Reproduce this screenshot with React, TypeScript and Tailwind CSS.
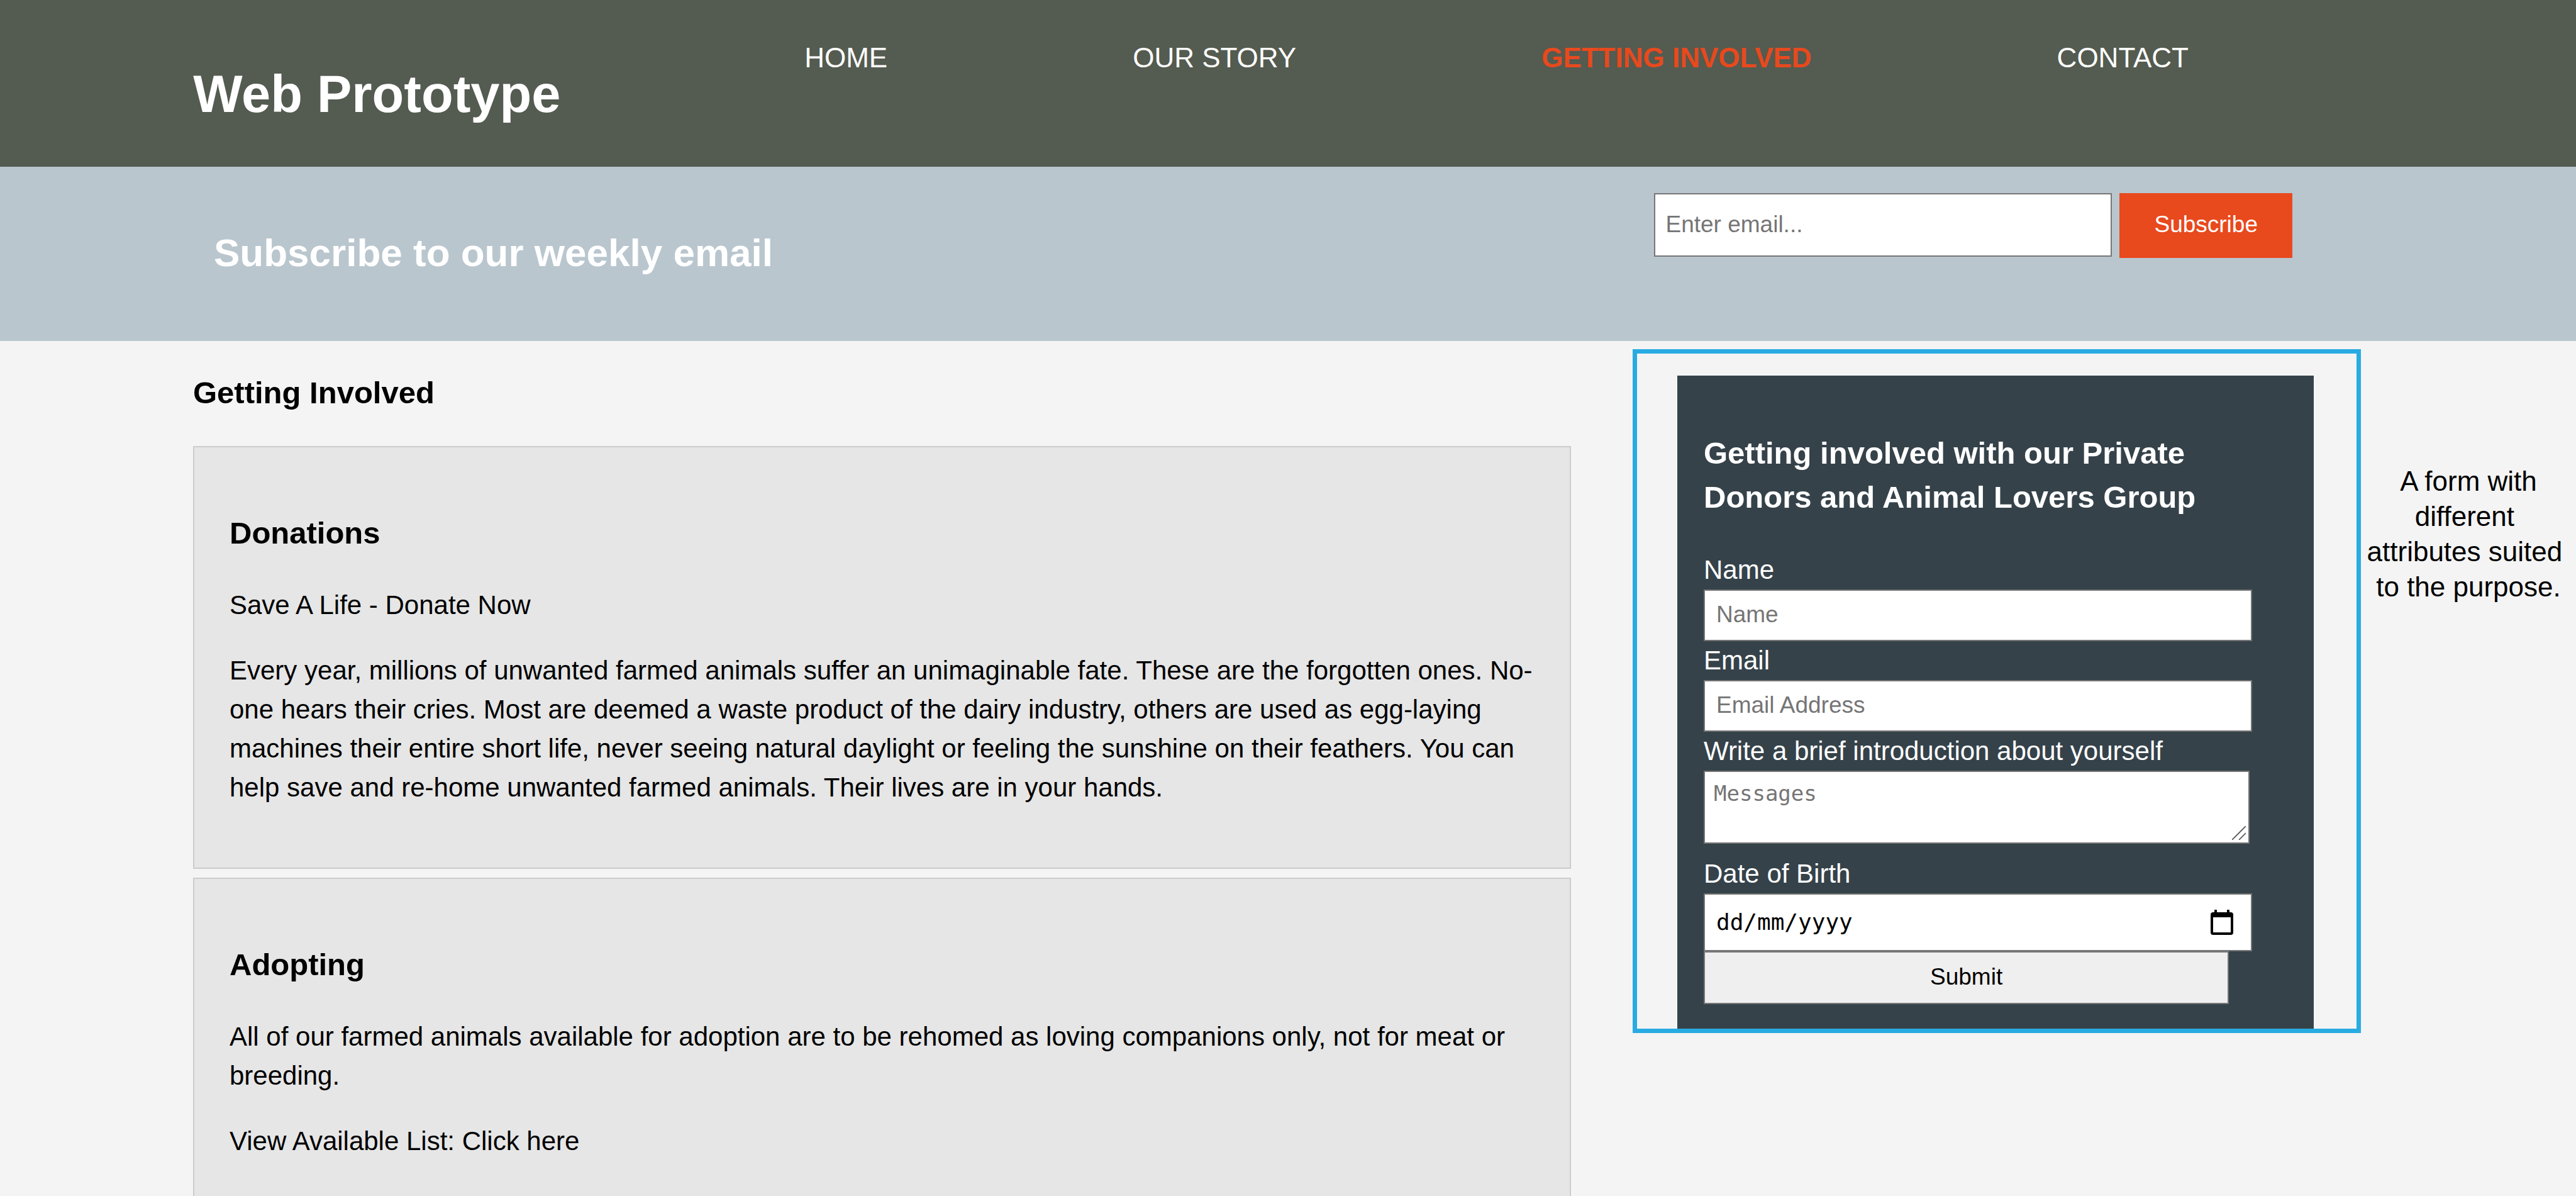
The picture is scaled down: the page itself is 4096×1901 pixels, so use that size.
import React from 'react';

const navItems = [
  { label: 'HOME', active: false },
  { label: 'OUR STORY', active: false },
  { label: 'GETTING INVOLVED', active: true },
  { label: 'CONTACT', active: false },
];

const fieldClass =
  'block h-[82px] w-[94%] border-2 border-[#767676] bg-white px-[18px] pb-[3px] text-[37px] leading-[44px] text-black placeholder:text-[#757575] placeholder:opacity-100 outline-none';

function Header() {
  return (
    <header className="flex h-[265px] items-start bg-[#545b50] px-[7.5%] text-white">
      <h1 className="w-[972px] pt-[88px] text-[83px] leading-[124px] font-bold whitespace-nowrap">Web Prototype</h1>
      <nav className="pt-[61px]">
        <ul className="flex gap-[390px]">
          {navItems.map((item) => (
            <li key={item.label}>
              <a
                href="#"
                className={
                  item.active
                    ? 'text-[44px] leading-[62px] font-bold whitespace-nowrap text-[#e8491d]'
                    : 'text-[44px] leading-[62px] whitespace-nowrap text-white'
                }
              >
                {item.label}
              </a>
            </li>
          ))}
        </ul>
      </nav>
    </header>
  );
}

function Newsletter() {
  return (
    <section className="flex h-[277px] items-start justify-between bg-[#b9c6ce] pr-[451px] pl-[340px]">
      <h2 className="pt-[90px] text-[62px] leading-[93px] font-bold text-white">Subscribe to our weekly email</h2>
      <form className="flex items-start gap-[12px] pt-[42px]" onSubmit={(e) => e.preventDefault()}>
        <input
          type="email"
          aria-label="Email for the weekly newsletter"
          placeholder="Enter email..."
          className="h-[101px] w-[728px] border-2 border-[#767676] bg-white px-[16px] pb-[2px] text-[37px] text-black placeholder:text-[#757575] placeholder:opacity-100 outline-none"
        />
        <button type="submit" className="h-[103px] bg-[#e8491d] px-[55px] pb-[4px] text-[37px] text-white">
          Subscribe
        </button>
      </form>
    </section>
  );
}

function Card({ title, children }: { title: string; children: React.ReactNode }) {
  return (
    <article className="border-2 border-[#cccccc] bg-[#e6e6e6] px-[56px] pt-[52px] pb-[54px]">
      <h3 className="my-[49px] text-[49px] leading-[70px] font-bold">{title}</h3>
      <div className="flex flex-col gap-[42px] pb-[42px] text-[42px] leading-[62px]">{children}</div>
    </article>
  );
}

function CalendarIcon() {
  return (
    <svg viewBox="0 0 18 20" className="h-[40px] w-[36px]" fill="#000" aria-hidden="true">
      <path
        fillRule="evenodd"
        d="M3 0h2v2h8V0h2v2h1a2 2 0 0 1 2 2v14a2 2 0 0 1-2 2H2a2 2 0 0 1-2-2V4a2 2 0 0 1 2-2h1V0Zm-1 6v12h14V6H2Z"
      />
    </svg>
  );
}

function SignupPanel() {
  return (
    <div className="border-[7px] border-[#29abe2] pt-[35px] pr-[68px] pl-[64px]">
      <form
        className="bg-[#35424a] px-[42px] pt-[39px] pb-[39px] text-[42px] leading-[62px] text-white"
        onSubmit={(e) => e.preventDefault()}
      >
        <h3 className="mt-[49px] mb-[50px] text-[49px] leading-[70px] font-bold">
          Getting involved with our Private
          <br />
          Donors and Animal Lovers Group
        </h3>
        <label htmlFor="name" className="block">Name</label>
        <input id="name" type="text" placeholder="Name" className={fieldClass} />
        <label htmlFor="email" className="block">Email</label>
        <input id="email" type="email" placeholder="Email Address" className={fieldClass} />
        <label htmlFor="intro" className="block">Write a brief introduction about yourself</label>
        <div className="relative w-[93.5%]">
          <textarea
            id="intro"
            placeholder="Messages"
            className="block h-[116px] w-full resize-none border-2 border-[#767676] bg-white px-[14px] py-[12px] font-['DejaVu_Sans_Mono',monospace] text-[34px] leading-[44px] text-black placeholder:text-[#757575] placeholder:opacity-100 outline-none"
          />
          <svg viewBox="0 0 10 10" className="absolute right-[6px] bottom-[6px] size-[22px]" fill="none" stroke="#555" strokeWidth="0.8" aria-hidden="true">
            <path d="M0 10 10 0M5 10l5-5" />
          </svg>
        </div>
        <label htmlFor="dob" className="mt-[17px] block">Date of Birth</label>
        <div className="flex h-[92px] w-[94%] items-center border-2 border-[#767676] bg-white pr-[28px] pl-[18px]">
          <input
            id="dob"
            type="text"
            placeholder="dd/mm/yyyy"
            className="min-w-0 flex-1 bg-white font-['DejaVu_Sans_Mono',monospace] text-[36px] leading-[44px] text-black placeholder:text-black placeholder:opacity-100 outline-none"
          />
          <button type="button" aria-label="Choose a date">
            <CalendarIcon />
          </button>
        </div>
        <button
          type="submit"
          className="block h-[84px] w-[90%] border-2 border-[#767676] bg-[#efefef] pb-[2px] text-[37px] leading-[44px] text-black"
        >
          Submit
        </button>
      </form>
    </div>
  );
}

export default function App() {
  return (
    <div className="h-screen overflow-hidden bg-[#f4f4f4] font-['Liberation_Sans',Arial,sans-serif] text-black">
      <Header />
      <Newsletter />
      <main className="grid grid-cols-[307fr_2191fr_98fr_1158fr_342fr] items-start">
        <section className="col-start-2">
          <h2 className="pt-[47px] pb-[50px] text-[49px] leading-[70px] font-bold">Getting Involved</h2>
          <div className="flex flex-col gap-[14px]">
            <Card title="Donations">
              <p>Save A Life - Donate Now</p>
              <p>
                Every year, millions of unwanted farmed animals suffer an unimaginable fate. These are the forgotten
                ones. No-one hears their cries. Most are deemed a waste product of the dairy industry, others are used
                as egg-laying machines their entire short life, never seeing natural daylight or feeling the sunshine on
                their feathers. You can help save and re-home unwanted farmed animals. Their lives are in your hands.
              </p>
            </Card>
            <Card title="Adopting">
              <p>
                All of our farmed animals available for adoption are to be rehomed as loving companions only, not for
                meat or breeding.
              </p>
              <p>View Available List: Click here</p>
            </Card>
          </div>
        </section>
        <aside className="col-start-4 pt-[13px]">
          <SignupPanel />
        </aside>
        <p className="col-start-5 pt-[195px] text-center text-[44px] leading-[56px] whitespace-nowrap">
          A form with
          <br />
          different&nbsp;
          <br />
          attributes suited&nbsp;
          <br />
          to the purpose.
        </p>
      </main>
    </div>
  );
}
